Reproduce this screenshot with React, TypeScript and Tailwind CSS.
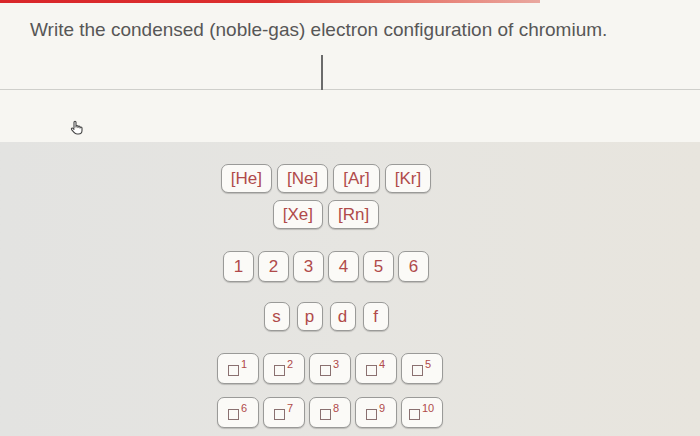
import React from 'react';

const gases = [['[He]', '[Ne]', '[Ar]', '[Kr]'], ['[Xe]', '[Rn]']];
const numbers = ['1', '2', '3', '4', '5', '6'];
const orbitals = ['s', 'p', 'd', 'f'];
const powers = [['1', '2', '3', '4', '5'], ['6', '7', '8', '9', '10']];

const keyClass =
    'h-[29px] flex items-center justify-center rounded-[7px] border border-[#9a9a98] bg-[#fbfaf7] text-[#b04a4a] shadow-[0_1px_1px_rgba(0,0,0,0.18)]';

function HandCursor() {
    return (
        <svg width="14" height="15" viewBox="0 0 14 15" fill="none">
            <path
                d="M4 8V2.2a1 1 0 0 1 2 0V7 M6 6.5a1 1 0 0 1 2 0V7.5 M8 7a1 1 0 0 1 2 0V8 M10 8a1 1 0 0 1 2 0v2.5c0 2-1.5 3.5-3.5 3.5H7c-1.3 0-2.2-.6-3-1.6L1.6 9.6a1 1 0 0 1 1.5-1.3L4 9.3"
                stroke="#444"
                strokeWidth="1.1"
                strokeLinecap="round"
                strokeLinejoin="round"
                fill="#fff"
            />
        </svg>
    );
}

export default function App() {
    return (
        <div className="w-[700px] h-[436px] overflow-hidden bg-[#f7f6f2] flex flex-col" style={{ fontFamily: '"Liberation Sans", Arial, sans-serif' }}>
            <div className="h-[3px] w-[540px] bg-gradient-to-r from-[#d9262a] via-[#dc2f2f] to-[#e9a8a0]" />
            <p className="pl-[30px] pt-[15px] text-[19px] leading-[23px] text-[#575757]">
                Write the condensed (noble-gas) electron configuration of chromium.
            </p>

            {/* answer field */}
            <div className="h-[49px] border-b border-[#cfcfcb] flex justify-center">
                <div className="ml-[-56px] mt-[14px] w-[2px] h-[35px] bg-[#6b6b6b]" />
            </div>
            <div className="h-[52px] flex items-end pl-[70px] pb-[7px]">
                <HandCursor />
            </div>

            {/* palette */}
            <div className="flex-1 bg-gradient-to-r from-[#e3e3e1] via-[#e6e5e1] to-[#e8e5de] flex flex-col items-center pr-[48px] pt-[22px]">
                <div className="flex flex-col items-center gap-[7px]">
                    {gases.map((row, i) => (
                        <div key={i} className="flex gap-[5px]">
                            {row.map((g) => (
                                <div key={g} className={`${keyClass} px-[9px] text-[17px]`}>{g}</div>
                            ))}
                        </div>
                    ))}
                </div>

                <div className="flex gap-[4px] mt-[22px] h-[31px]">
                    {numbers.map((n) => (
                        <div key={n} className={`${keyClass} h-[31px] w-[31px] text-[17px]`}>{n}</div>
                    ))}
                </div>

                <div className="flex gap-[7px] mt-[20px]">
                    {orbitals.map((o) => (
                        <div key={o} className={`${keyClass} h-[28px] w-[26px] text-[17px]`}>{o}</div>
                    ))}
                </div>

                <div className="flex flex-col gap-[13px] mt-[22px] ml-[7px]">
                    {powers.map((row, i) => (
                        <div key={i} className="flex gap-[4px]">
                            {row.map((p) => (
                                <div key={p} className={`${keyClass} h-[31px] w-[42px] gap-[2px]`}>
                                    <span className="w-[11px] h-[11px] border border-[#8a7070] mt-[4px]" />
                                    <span className="text-[11px] leading-none mb-[8px]">{p}</span>
                                </div>
                            ))}
                        </div>
                    ))}
                </div>
            </div>
        </div>
    );
}
